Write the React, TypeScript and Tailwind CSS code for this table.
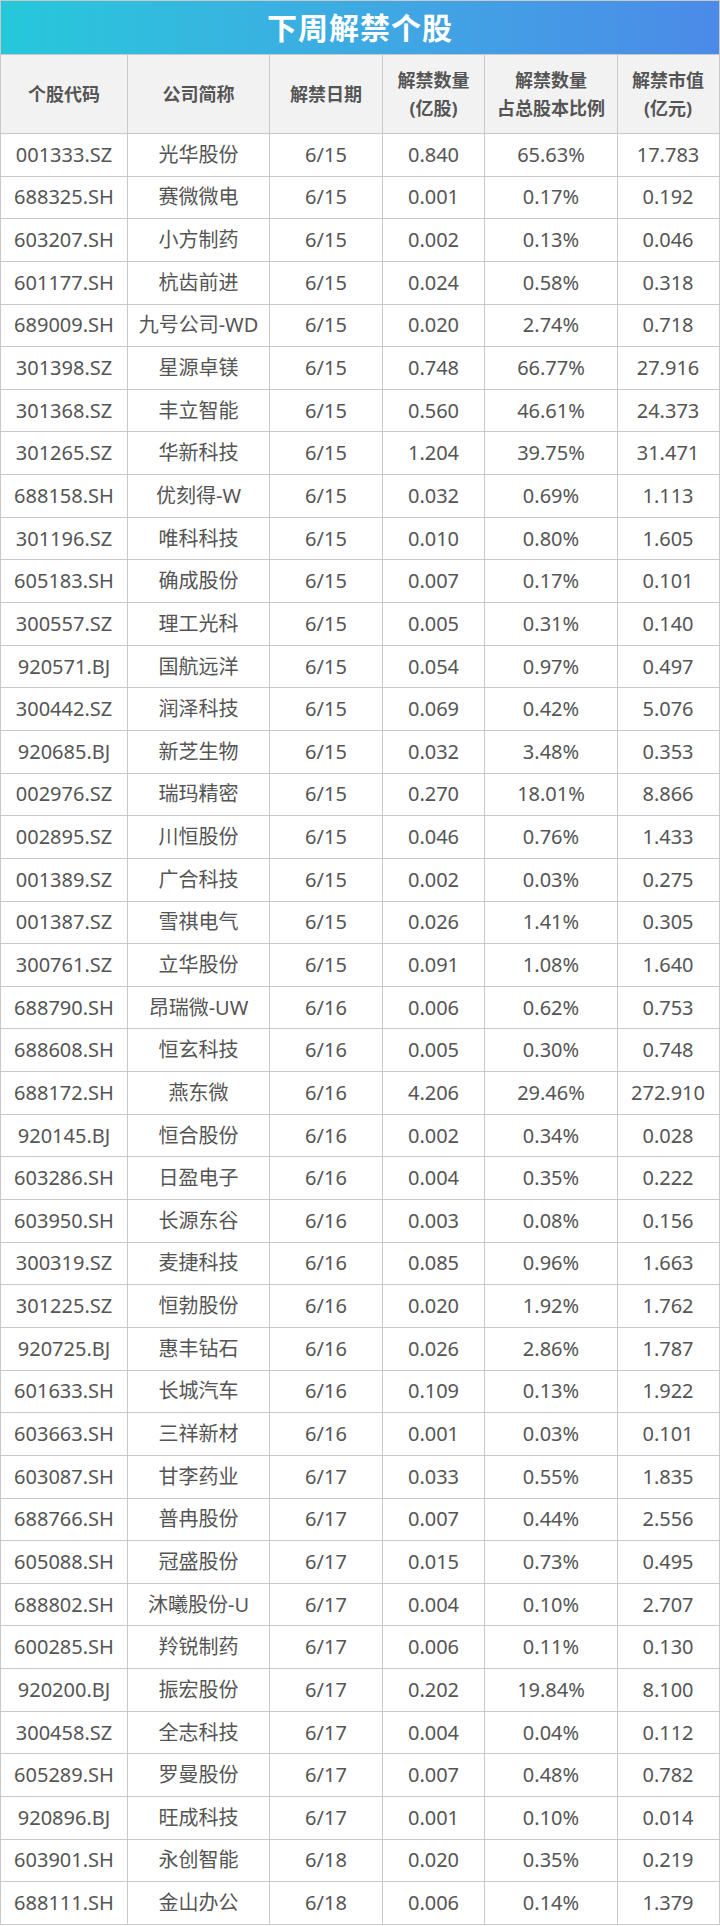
const rows: string[][] = [
  ['001333.SZ', '光华股份', '6/15', '0.840', '65.63%', '17.783'],
  ['688325.SH', '赛微微电', '6/15', '0.001', '0.17%', '0.192'],
  ['603207.SH', '小方制药', '6/15', '0.002', '0.13%', '0.046'],
  ['601177.SH', '杭齿前进', '6/15', '0.024', '0.58%', '0.318'],
  ['689009.SH', '九号公司-WD', '6/15', '0.020', '2.74%', '0.718'],
  ['301398.SZ', '星源卓镁', '6/15', '0.748', '66.77%', '27.916'],
  ['301368.SZ', '丰立智能', '6/15', '0.560', '46.61%', '24.373'],
  ['301265.SZ', '华新科技', '6/15', '1.204', '39.75%', '31.471'],
  ['688158.SH', '优刻得-W', '6/15', '0.032', '0.69%', '1.113'],
  ['301196.SZ', '唯科科技', '6/15', '0.010', '0.80%', '1.605'],
  ['605183.SH', '确成股份', '6/15', '0.007', '0.17%', '0.101'],
  ['300557.SZ', '理工光科', '6/15', '0.005', '0.31%', '0.140'],
  ['920571.BJ', '国航远洋', '6/15', '0.054', '0.97%', '0.497'],
  ['300442.SZ', '润泽科技', '6/15', '0.069', '0.42%', '5.076'],
  ['920685.BJ', '新芝生物', '6/15', '0.032', '3.48%', '0.353'],
  ['002976.SZ', '瑞玛精密', '6/15', '0.270', '18.01%', '8.866'],
  ['002895.SZ', '川恒股份', '6/15', '0.046', '0.76%', '1.433'],
  ['001389.SZ', '广合科技', '6/15', '0.002', '0.03%', '0.275'],
  ['001387.SZ', '雪祺电气', '6/15', '0.026', '1.41%', '0.305'],
  ['300761.SZ', '立华股份', '6/15', '0.091', '1.08%', '1.640'],
  ['688790.SH', '昂瑞微-UW', '6/16', '0.006', '0.62%', '0.753'],
  ['688608.SH', '恒玄科技', '6/16', '0.005', '0.30%', '0.748'],
  ['688172.SH', '燕东微', '6/16', '4.206', '29.46%', '272.910'],
  ['920145.BJ', '恒合股份', '6/16', '0.002', '0.34%', '0.028'],
  ['603286.SH', '日盈电子', '6/16', '0.004', '0.35%', '0.222'],
  ['603950.SH', '长源东谷', '6/16', '0.003', '0.08%', '0.156'],
  ['300319.SZ', '麦捷科技', '6/16', '0.085', '0.96%', '1.663'],
  ['301225.SZ', '恒勃股份', '6/16', '0.020', '1.92%', '1.762'],
  ['920725.BJ', '惠丰钻石', '6/16', '0.026', '2.86%', '1.787'],
  ['601633.SH', '长城汽车', '6/16', '0.109', '0.13%', '1.922'],
  ['603663.SH', '三祥新材', '6/16', '0.001', '0.03%', '0.101'],
  ['603087.SH', '甘李药业', '6/17', '0.033', '0.55%', '1.835'],
  ['688766.SH', '普冉股份', '6/17', '0.007', '0.44%', '2.556'],
  ['605088.SH', '冠盛股份', '6/17', '0.015', '0.73%', '0.495'],
  ['688802.SH', '沐曦股份-U', '6/17', '0.004', '0.10%', '2.707'],
  ['600285.SH', '羚锐制药', '6/17', '0.006', '0.11%', '0.130'],
  ['920200.BJ', '振宏股份', '6/17', '0.202', '19.84%', '8.100'],
  ['300458.SZ', '全志科技', '6/17', '0.004', '0.04%', '0.112'],
  ['605289.SH', '罗曼股份', '6/17', '0.007', '0.48%', '0.782'],
  ['920896.BJ', '旺成科技', '6/17', '0.001', '0.10%', '0.014'],
  ['603901.SH', '永创智能', '6/18', '0.020', '0.35%', '0.219'],
  ['688111.SH', '金山办公', '6/18', '0.006', '0.14%', '1.379'],
];

const headers: string[][] = [
  ['个股代码'],
  ['公司简称'],
  ['解禁日期'],
  ['解禁数量', '(亿股)'],
  ['解禁数量', '占总股本比例'],
  ['解禁市值', '(亿元)'],
];

const cols = 'grid grid-cols-[127px_142px_113px_102px_133px_100px]';

export default function App() {
  return (
    <div
      className="w-[720px] border border-[#c9c9c9] bg-white"
      style={{ fontFamily: '"Noto Sans", "Noto Sans CJK SC", sans-serif' }}
    >
      {/* Title */}
      <div className="h-[53px] flex items-center justify-center bg-gradient-to-r from-[#25c8db] to-[#4b8ae8]">
        <h1 className="text-[30px] font-bold text-white tracking-[1px]">下周解禁个股</h1>
      </div>

      {/* Header */}
      <div className={`${cols} h-[79px] bg-[#f2f2f2] border-t border-[#c9c9c9]`}>
        {headers.map((lines, i) => (
          <div
            key={i}
            className={`flex flex-col items-center justify-center text-[18px] font-bold leading-[28px] text-[#555] ${
              i < 5 ? 'border-r border-[#c9c9c9]' : ''
            }`}
          >
            {lines.map((l) => (
              <span key={l}>{l}</span>
            ))}
          </div>
        ))}
      </div>

      {/* Rows */}
      {rows.map((r) => (
        <div key={r[0]} className={`${cols} h-[42.65px] border-t border-[#c9c9c9]`}>
          {r.map((cell, i) => (
            <div
              key={i}
              className={`flex items-center justify-center text-[20px] text-[#555] whitespace-nowrap ${
                i < 5 ? 'border-r border-[#c9c9c9]' : ''
              }`}
            >
              {cell}
            </div>
          ))}
        </div>
      ))}
    </div>
  );
}
